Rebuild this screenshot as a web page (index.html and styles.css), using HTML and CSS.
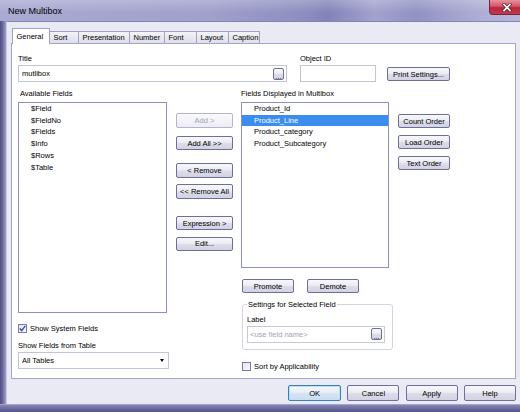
FILE: index.html
```html
<!DOCTYPE html>
<html>
<head>
<meta charset="utf-8">
<link rel="stylesheet" href="styles.css">
</head>
<body>
<div class="window">
  <div class="titlebar">
    <span class="title">New Multibox</span>
    <div class="close">
      <svg width="10" height="9" viewBox="0 0 10 9"><path d="M2 1.5 L8 7.5 M8 1.5 L2 7.5" stroke="#5a2838" stroke-width="3.2" stroke-linecap="square"/><path d="M2 1.5 L8 7.5 M8 1.5 L2 7.5" stroke="#ffffff" stroke-width="1.6" stroke-linecap="square"/></svg>
    </div>
  </div>
  <div class="main">
    <div class="lframe"></div>
    <div class="client">
      <div class="tabs">
        <div class="tab sel">General</div>
        <div class="tab t-sort">Sort</div>
        <div class="tab t-pres">Presentation</div>
        <div class="tab t-num">Number</div>
        <div class="tab t-font">Font</div>
        <div class="tab t-lay">Layout</div>
        <div class="tab t-cap">Caption</div>
      </div>
      <div class="panel">
        <div class="toprow">
          <div class="title-col">
            <div class="lbl">Title</div>
            <div class="field title-field"><span>mutlibox</span><button class="btn dots">...</button></div>
          </div>
          <div class="oid-col">
            <div class="lbl">Object ID</div>
            <div class="field"></div>
          </div>
          <button class="btn print">Print Settings...</button>
        </div>
        <div class="bottomrow">
          <div class="col-a">
            <div class="lbl lbl-av">Available Fields</div>
            <div class="list list-a">
              <div class="item">$Field</div>
              <div class="item">$FieldNo</div>
              <div class="item">$Fields</div>
              <div class="item">$Info</div>
              <div class="item">$Rows</div>
              <div class="item">$Table</div>
            </div>
            <div class="chk-row chk-sys">
              <span class="box"><svg width="7" height="7" viewBox="0 0 7 7"><path d="M0.8 3.6 L2.7 5.6 L6.3 0.9" fill="none" stroke="#2b4fa6" stroke-width="1.4"/></svg></span>
              <span>Show System Fields</span>
            </div>
            <div class="lbl lbl-tbl">Show Fields from Table</div>
            <div class="field combo"><span>All Tables</span><span class="arrow"></span></div>
          </div>
          <div class="col-b">
            <button class="btn mb b-add disabled">Add &gt;</button>
            <button class="btn mb b-addall">Add All &gt;&gt;</button>
            <button class="btn mb b-rem">&lt; Remove</button>
            <button class="btn mb b-remall">&lt;&lt; Remove All</button>
            <button class="btn mb b-expr">Expression &gt;</button>
            <button class="btn mb b-edit">Edit...</button>
          </div>
          <div class="col-c">
            <div class="lbl">Fields Displayed in Multibox</div>
            <div class="list list-c">
              <div class="item">Product_Id</div>
              <div class="item selected">Product_Line</div>
              <div class="item">Product_category</div>
              <div class="item">Product_Subcategory</div>
            </div>
            <div class="pd-row">
              <button class="btn pd promote">Promote</button>
              <button class="btn pd demote">Demote</button>
            </div>
            <fieldset class="group">
              <legend>Settings for Selected Field</legend>
              <div class="lbl">Label</div>
              <div class="field label-field"><span class="ph">&lt;use field name&gt;</span><button class="btn dots">...</button></div>
            </fieldset>
            <div class="chk-row chk-sort">
              <span class="box"></span>
              <span>Sort by Applicability</span>
            </div>
          </div>
          <div class="col-d">
            <button class="btn ob">Count Order</button>
            <button class="btn ob">Load Order</button>
            <button class="btn ob">Text Order</button>
          </div>
        </div>
      </div>
      <div class="footer">
        <button class="btn fb ok">OK</button>
        <button class="btn fb">Cancel</button>
        <button class="btn fb">Apply</button>
        <button class="btn fb">Help</button>
      </div>
    </div>
  </div>
  <div class="bframe"></div>
</div>
</body>
</html>
```
FILE: styles.css
```css
* { box-sizing: border-box; }
html, body { margin: 0; padding: 0; }
body {
  width: 520px;
  height: 412px;
  overflow: hidden;
  font-family: "Liberation Sans", Arial, sans-serif;
  font-size: 7.5px;
  color: #000;
}
.window {
  width: 520px;
  height: 412px;
  display: flex;
  flex-direction: column;
  background: #eaeaf4;
  overflow: hidden;
}
.titlebar {
  height: 21px;
  flex: none;
  display: flex;
  justify-content: space-between;
  align-items: flex-start;
  background:
    linear-gradient(180deg, rgba(255,255,255,0.22), rgba(255,255,255,0) 60%),
    linear-gradient(90deg, #aaaad3 0%, #a0a0cc 40%, #8e8ec0 58%, #8383b8 63%, #a2a2ce 72%, #9292c3 80%, #adadd5 92%, #b6b6dc 100%);
}
.title {
  font-size: 9px;
  padding-left: 8px;
  line-height: 23px;
  color: #000;
}
.close {
  width: 36px;
  height: 15px;
  margin-right: -5px;
  border: 1px solid #7a2436;
  border-top: none;
  border-radius: 0 0 0 4px;
  background: linear-gradient(180deg, #e8929e 0%, #d45466 45%, #b7263c 55%, #c4384c 100%);
  display: flex;
  align-items: center;
  justify-content: center;
}
.main {
  flex: 1;
  display: flex;
  min-height: 0;
}
.lframe {
  width: 6px;
  flex: none;
  background: linear-gradient(90deg, #4c4c7e 0%, #6a6a9e 45%, #8a8abb 80%, #a3a3cc 100%);
}
.client {
  flex: 1;
  border-left: 1px solid #c9c9e3;
  border-top: 1px solid #8484b4;
  padding: 6px 4px 0 4px;
  display: flex;
  flex-direction: column;
}
.bframe {
  height: 8px;
  flex: none;
  border-top: 1px solid #a3a3cb;
  background: linear-gradient(180deg, #8585b6 0%, #6c6ca0 50%, #55558a 100%);
}

/* tabs */
.tabs {
  display: flex;
  align-items: flex-end;
  height: 15px;
  padding-left: 1px;
}
.tab {
  height: 12px;
  border: 1px solid #a2a2c4;
  border-bottom: none;
  margin-right: -1px;
  padding-left: 3.5px;
  line-height: 12px;
  background: linear-gradient(180deg, #f3f3f8, #dedeea);
  white-space: nowrap;
}
.tab.sel {
  height: 16px;
  margin-bottom: -1px;
  line-height: 15px;
  background: #fff;
  position: relative;
  z-index: 1;
  width: 38px;
}
.t-sort { width: 30px; }
.t-pres { width: 52px; }
.t-num { width: 36px; }
.t-font { width: 33px; }
.t-lay { width: 33px; }
.t-cap { width: 32px; }

/* panel */
.panel {
  height: 336px;
  border: 1px solid #a5a5c8;
  background: #fff;
  padding: 10px 0 0 6px;
}
.lbl {
  line-height: 10px;
  height: 10px;
  white-space: nowrap;
}
.field {
  height: 17px;
  border: 1px solid #c3c3d9;
  background: #fff;
  display: flex;
  align-items: center;
  justify-content: space-between;
  padding-left: 3px;
}
.toprow {
  display: flex;
  align-items: flex-end;
  height: 28px;
}
.title-col { width: 269px; }
.title-col .lbl, .oid-col .lbl { margin-bottom: 1px; }
.oid-col { width: 76px; margin-left: 13px; }
.btn {
  font-family: inherit;
  font-size: 7.5px;
  color: #000;
  border: 1px solid #6e6e9a;
  border-radius: 2px;
  background: linear-gradient(180deg, #f7f7fb 0%, #ececf4 45%, #dcdce9 55%, #d2d2e3 100%);
  padding: 0;
  margin: 0;
  text-align: center;
  white-space: nowrap;
}
.dots {
  width: 11px;
  height: 12px;
  margin-right: 2px;
  line-height: 12px;
  padding-top: 2px;
  font-size: 7px;
}
.print {
  margin-left: 11px;
  width: 63px;
  height: 14px;
  margin-bottom: 1px;
}

.bottomrow {
  display: flex;
  align-items: flex-start;
  margin-top: 7px;
}
.col-a { width: 151px; }
.lbl-av { padding-left: 2px; margin-bottom: 3px; }
.list {
  border: 1px solid #8e8ec6;
  background: #fff;
  line-height: 11.7px;
}
.list-a { width: 149px; height: 211px; }
.item { padding-left: 12px; white-space: nowrap; }
.item.selected { background: #3b8ef0; color: #fff; }
.chk-row {
  display: flex;
  align-items: center;
  gap: 3px;
  height: 9px;
}
.chk-sys { margin-top: 11px; }
.box {
  width: 9px;
  height: 9px;
  border: 1px solid #7a7aa8;
  background: linear-gradient(135deg, #e4e4ee, #fbfbfd);
  display: flex;
  align-items: center;
  justify-content: center;
  flex: none;
}
.lbl-tbl { margin-top: 8px; }
.combo {
  margin-top: 1px;
  width: 151px;
  padding-left: 3px;
  padding-right: 4px;
}
.arrow {
  width: 0;
  height: 0;
  border-left: 2.5px solid transparent;
  border-right: 2.5px solid transparent;
  border-top: 3px solid #000;
}

.col-b {
  width: 57px;
  margin-left: 7px;
  display: flex;
  flex-direction: column;
}
.mb { height: 14.5px; width: 57px; }
.b-add { margin-top: 24.3px; }
.b-addall { margin-top: 8px; }
.b-rem { margin-top: 13px; }
.b-remall { margin-top: 6.5px; }
.b-expr { margin-top: 17.2px; }
.b-edit { margin-top: 6.2px; }
.btn.disabled {
  color: #a3a3b8;
  border-color: #b4b4cf;
  background: linear-gradient(180deg, #fafafd, #ececf3);
}

.col-c { width: 152px; margin-left: 8px; }
.col-c > .lbl { margin-bottom: 3px; }
.list-c { width: 148px; height: 166px; }
.pd-row { display: flex; margin-top: 11px; }
.pd { width: 52px; height: 14px; }
.promote { margin-left: 1px; }
.demote { margin-left: 13px; }
.group {
  margin: 6.7px 0 0 1px;
  width: 151px;
  border: 1px solid #d3d3e3;
  border-radius: 3px;
  padding: 5px 6px 6px 4px;
}
.group legend {
  padding: 0 1px;
  line-height: 10px;
  font-size: 7.5px;
}
.group .lbl { margin-bottom: 1px; }
.label-field { width: 138px; padding-left: 2px; border-color: #c9c9dc; }
.ph { color: #a2a2ba; }
.chk-sort { margin-top: 12.5px; margin-left: 1px; }

.col-d {
  width: 52px;
  margin-left: 5px;
  display: flex;
  flex-direction: column;
  padding-top: 25px;
  gap: 7px;
}
.ob { height: 14px; width: 52px; }

.footer {
  display: flex;
  justify-content: flex-end;
  gap: 6.3px;
  margin-top: 6px;
}
.fb { width: 52px; height: 16px; }
.fb.ok {
  width: 53px;
  border-color: #3b7cba;
  background: linear-gradient(180deg, #f4f8fc 0%, #e6eef7 45%, #d6e3f1 55%, #cddcee 100%);
  box-shadow: inset 0 0 0 1px #bfe0f8;
}
```
